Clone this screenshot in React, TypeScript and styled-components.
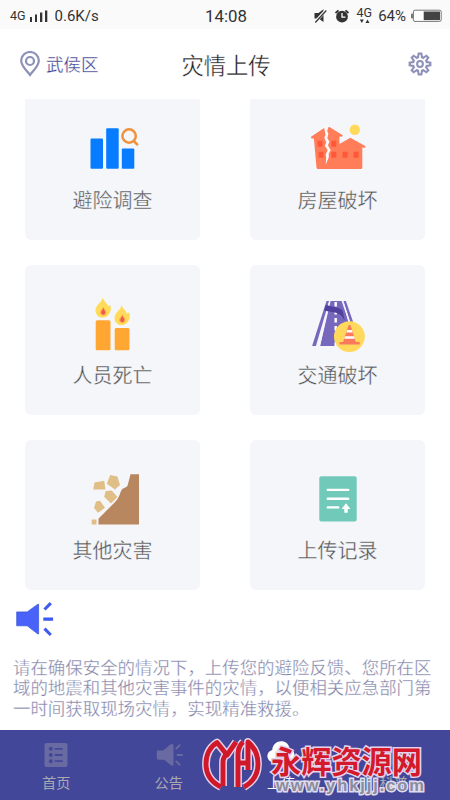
import React from "react";
import styled, { createGlobalStyle } from "styled-components";

const GlobalStyle = createGlobalStyle`
  * { box-sizing: border-box; }
  body {
    margin: 0;
    background: #fff;
    font-family: "Noto Sans CJK SC", "Noto Sans", sans-serif;
  }
  svg { display: block; flex: none; }
`;

const Screen = styled.div`
  width: 450px;
  height: 800px;
  display: flex;
  flex-direction: column;
  overflow: hidden;
  background: #fff;
`;

const StatusBar = styled.div`
  height: 29px;
  flex: none;
  display: grid;
  grid-template-columns: 1fr auto 1fr;
  align-items: center;
  padding: 2px 8px 0 10px;
  background: #fafafa;
  color: #333;
  font-family: Roboto, sans-serif;
`;

const StatusGroup = styled.div<{ $end?: boolean }>`
  display: flex;
  align-items: center;
  justify-content: ${(p) => (p.$end ? "flex-end" : "flex-start")};
`;

const StatusText = styled.span<{ $size: number; $ml?: number }>`
  font-size: ${(p) => p.$size}px;
  line-height: 20px;
  margin-left: ${(p) => p.$ml ?? 0}px;
  white-space: nowrap;
`;

const Header = styled.header`
  height: 70px;
  flex: none;
  display: grid;
  grid-template-columns: 1fr auto 1fr;
  align-items: center;
  padding: 0 18px 0 20px;
`;

const Location = styled.div`
  display: flex;
  align-items: center;
  gap: 6px;
  color: #383a8c;
  font-size: 17.5px;
  line-height: 26px;
  -webkit-text-stroke: 0.3px #fff;
`;

const Title = styled.h1`
  margin: 0 0 1px;
  color: #1c1c1c;
  font-size: 22.3px;
  font-weight: 400;
  line-height: 32px;
  -webkit-text-stroke: 0.35px #fff;
`;

const Settings = styled.div`
  justify-self: end;
`;

const Grid = styled.main`
  display: grid;
  grid-template-columns: 175px 175px;
  grid-template-rows: 141px 150px 150px;
  gap: 25px 50px;
  padding-left: 25px;
  flex: none;
`;

const Card = styled.div<{ $clipped?: boolean }>`
  display: flex;
  flex-direction: column;
  align-items: center;
  padding-top: ${(p) => (p.$clipped ? 17 : 26)}px;
  border-radius: ${(p) => (p.$clipped ? "0 0 6px 6px" : "6px")};
  background: #f4f6fa;
`;

const CardLabel = styled.span`
  margin-top: 4.5px;
  color: #505152;
  font-size: 20px;
  line-height: 30px;
  -webkit-text-stroke: 0.35px #f4f6fa;
`;

const Notice = styled.section`
  flex: 1;
  padding: 10px 0 0 13px;
`;

const NoticeText = styled.p`
  margin: 17px 0 0;
  color: #8082a8;
  font-size: 17.45px;
  line-height: 20.3px;
  white-space: nowrap;
  -webkit-text-stroke: 0.3px #fff;
`;

const TabBar = styled.nav`
  position: relative;
  height: 70px;
  flex: none;
  display: grid;
  grid-template-columns: repeat(4, 1fr);
  background: #434799;
`;

const Tab = styled.div<{ $active?: boolean }>`
  display: flex;
  flex-direction: column;
  align-items: center;
  padding-top: 11px;
  color: ${(p) => (p.$active ? "#fff" : "#aaa9b1")};
  font-size: 14.2px;
  line-height: 20px;
`;

const TabLabel = styled.span`
  margin-top: 3px;
`;

const Watermark = styled.div`
  position: absolute;
  left: 202px;
  top: 8px;
  display: flex;
  gap: 9px;
`;

const MarkName = styled.div`
  margin-top: 6px;
  color: #d3192b;
  font-size: 30.2px;
  font-weight: 700;
  line-height: 32px;
  white-space: nowrap;
  -webkit-text-stroke: 3px #e6d2eb;
  paint-order: stroke fill;
`;

const MarkUrl = styled.div`
  margin: -1px 0 0 5px;
  color: #8b8b9d;
  font-family: "Liberation Sans", Arial, sans-serif;
  font-size: 16.5px;
  font-weight: 700;
  letter-spacing: 1.9px;
  line-height: 21px;
  white-space: nowrap;
  -webkit-text-stroke: 3px #dfdced;
  paint-order: stroke fill;
`;

const CardIcon = ({ children }: { children: React.ReactNode }) => (
  <svg width="64" height="64" viewBox="55.5 26 64 64">{children}</svg>
);

const SurveyIcon = () => (
  <CardIcon>
    <g fill="#087cff">
      <rect x="65" y="48.5" width="12.5" height="30.3" rx="1" />
      <rect x="80.7" y="38.3" width="12.5" height="40.5" rx="1" />
      <rect x="96.3" y="58.5" width="12.5" height="20.3" rx="1" />
    </g>
    <g fill="none" stroke="#f0913d" strokeWidth="2.5">
      <circle cx="103.6" cy="46" r="6.7" />
      <path d="M108.2 51l4.2 4.2" />
    </g>
  </CardIcon>
);

const HouseIcon = () => (
  <CardIcon>
    <path d="M73.2 38.2 60.2 47l1 1.6 2.2-.2 2.6 29q.2 1.5 1.6 1.5h42.6q1.5 0 1.6-1.5V57.6l2.8.2.5-1.5-15.2-8.5-11 6.2V46.5l2.8.3.5-1.5-13.2-8.3Z" fill="#ff7d59" />
    <path d="M73.4 36.5 75 44.7l-1.2 3.1 2 4.6-1.6 3.3 3 4.2-2 4.5.5 3-.5 7.4 3.1-7.5-.1-3.8 2-3.2-2.8-5 1.6-3.6-2.2-3.7 1.1-4-1.2-3.2 1.7-5.3Z" fill="#f8f8fa" />
    <g fill="#ff5838">
      <rect x="67" y="50.8" width="5" height="6" rx=".6" />
      <rect x="80.8" y="50.8" width="5" height="6" rx=".6" />
      <rect x="68" y="61.8" width="5" height="6" rx=".6" />
      <rect x="80.8" y="61.8" width="5" height="6" rx=".6" />
      <rect x="92" y="61.8" width="5" height="6" rx=".6" />
      <rect x="103" y="61.8" width="5" height="6" rx=".6" />
    </g>
    <circle cx="104.3" cy="39.8" r="5.2" fill="#ffda59" />
  </CardIcon>
);

const Flame = ({ x, y }: { x: number; y: number }) => (
  <g transform={`translate(${x} ${y})`}>
    <path d="M7.5 0C8 4 12.3 5.6 12.5 9l2.3-1.2C17.5 13 13.4 20.5 7.8 20.5 2.5 20.5-.9 15.8.7 11 2.2 6.4 6.8 5.2 7.5 0Z" fill="#ffdb59" />
    <path d="M8 9.3c.2 2 3.5 4 3 6.2-.3 2-1.7 2.8-3 2.8s-3-1-3-3c0-2.3 2.5-2.7 3-6Z" fill="#ffa04f" />
    <path d="M8 10.6c0 2 2.2 3 1.9 4.9-.2 1.3-1 1.8-1.9 1.8s-1.7-.6-1.8-1.7c0-1.6 1.5-2.8 1.8-5Z" fill="#ef594c" />
  </g>
);

const CandlesIcon = () => (
  <CardIcon>
    <rect x="70.2" y="55.2" width="14.8" height="30" rx="1.5" fill="#ffa633" />
    <rect x="89.2" y="63" width="14.8" height="22.2" rx="1.5" fill="#ffa633" />
    <Flame x={69.7} y={32.2} />
    <Flame x={88.7} y={39.7} />
  </CardIcon>
);

const RoadIcon = () => (
  <CardIcon>
    <path d="M76 36h2.6L65.4 81h-3.8Z" fill="#7768be" />
    <path d="M79.4 36h13L104 81H69.6Z" fill="#7768be" />
    <path d="M93 36h2.4l8.6 25h-3.2Z" fill="#7768be" />
    <path d="m79.4 36-10.6 45M91.8 36l8.6 25" stroke="#f4f6fa" strokeWidth="1.4" />
    <path d="M85.2 37v44" stroke="#fff" strokeWidth="2.4" strokeDasharray="4.5 3.5" />
    <path d="m75.2 40 2.5.5c7 2 12.5 2 14.5 5.5l2 9.8c-2-3.8-4-6.2-8-7.8-4-1.3-8-1.2-12.5-2.5Z" fill="#51409d" />
    <circle cx="98.9" cy="71.6" r="15.4" fill="#ffd85c" />
    <path d="M98.2 60h1.6L105.4 77h3.8v2.4H89V77h3.6Z" fill="#fa795d" />
    <path d="M96.8 65h4.4l1 2.5h-6.3ZM94.7 71.2h8.7l1 2.6H93.8Z" fill="#fff" />
  </CardIcon>
);

const LandslideIcon = () => (
  <CardIcon>
    <path d="M105 34.2h8.5V84.5H73v-5.8c5-5.5 14-13.5 18.7-19.3 2.9-3.5 2.7-7.8 5.4-10.6 1-.8 4.3-1.3 5-3.3Z" fill="#b8875f" />
    <g fill="#dfbf86">
      <path d="m69 42.4 9.7-1.6 1.3 8.6H67.7Z" />
      <path d="m84.7 35 7.2 1.5 2.6 8.6-5 4.4-8.2-5.8Z" />
      <path d="m80.2 51 6-.5L92 57l-6.6 6.5-6.7-6.8Z" />
      <path d="m70.5 61.6 4-.8 5 7-7 5-4-4.7Z" />
      <rect x="66.2" y="79.5" width="4.8" height="5" rx=".6" />
    </g>
  </CardIcon>
);

const RecordIcon = () => (
  <CardIcon>
    <rect x="68.8" y="36.2" width="37.4" height="45.2" rx="2" fill="#71cab9" />
    <path d="M77.3 49.9h20.4M77.3 58.7h20.4M77.3 67.4h10.4" stroke="#fff" strokeWidth="2.4" strokeLinecap="round" />
    <path d="m95.5 63.2 4.4 5.8h-2.7v3.8h-3.4V69h-2.7Z" fill="#fff" />
  </CardIcon>
);

const cards = [
  { label: "避险调查", Icon: SurveyIcon },
  { label: "房屋破坏", Icon: HouseIcon },
  { label: "人员死亡", Icon: CandlesIcon },
  { label: "交通破坏", Icon: RoadIcon },
  { label: "其他灾害", Icon: LandslideIcon },
  { label: "上传记录", Icon: RecordIcon },
];

const PinIcon = () => (
  <svg width="20" height="26" viewBox="0 0 20 26" fill="none" stroke="#8d90b7" strokeWidth="2.2">
    <path d="M10 24C6.5 19.5 1.2 15 1.2 9.8a8.8 8.8 0 0 1 17.6 0C18.8 15 13.5 19.5 10 24Z" />
    <circle cx="10" cy="10" r="4" />
  </svg>
);

const teeth = Array.from({ length: 8 }, (_, i) => i * 45);

const GearIcon = () => (
  <svg width="24" height="24" viewBox="0 0 24 24">
    <g fill="#8d90b7">
      {teeth.map((a) => (
        <path key={a} d="M8.9 5.6 9.8.6h4.4l.9 5Z" transform={`rotate(${a} 12 12)`} />
      ))}
      <circle cx="12" cy="12" r="8" />
    </g>
    <g fill="#fff">
      {teeth.map((a) => (
        <path key={a} d="M10.9 6.5 11.4 2.8h1.2l.5 3.7Z" transform={`rotate(${a} 12 12)`} />
      ))}
      <circle cx="12" cy="12" r="6" />
    </g>
    <circle cx="12" cy="12" r="2.9" fill="none" stroke="#8d90b7" strokeWidth="2" />
  </svg>
);

const SignalIcon = () => (
  <svg width="26" height="16" viewBox="-4 0 26 16" fill="#333">
    <rect x="0" y="9" width="2" height="5" />
    <rect x="5" y="6.5" width="2" height="7.5" />
    <rect x="10" y="4.5" width="2.3" height="9.5" />
    <rect x="15" y="2.5" width="2.3" height="11.5" />
  </svg>
);

const StatusIcons = () => (
  <svg width="60" height="22" viewBox="313 3 60 22">
    <path d="M313.5 11h4l5-3.8V20l-5-3.4h-4Z" fill="#333" />
    <path d="m313.8 20.5 11-12" stroke="#fafafa" strokeWidth="3" />
    <path d="m314.3 20.5 11-12" stroke="#333" strokeWidth="1.2" />
    <circle cx="341" cy="14.7" r="5.9" fill="#333" />
    <path d="m334.5 11 3-2.7M344.5 8.3l3 2.7" stroke="#333" strokeWidth="1.8" />
    <path d="M341 11v4.2h3.4" fill="none" stroke="#fff" strokeWidth="1.3" />
    <text x="355.6" y="14.8" fill="#333" fontSize="12.5" fontFamily="Roboto, sans-serif">4G</text>
    <path d="M358.8 17.5h4l-2 3.4ZM364.5 20.9h4l-2-3.4Z" fill="#333" />
  </svg>
);

const BatteryIcon = () => (
  <svg width="31" height="14" viewBox="0 0 31 14">
    <path d="M0 4.7h2.2v4.6H0Z" fill="#777" />
    <rect x="2.4" y="1.2" width="27.8" height="11.2" rx="1.6" fill="#fff" stroke="#777" />
    <path d="M12.7 2.5H29v8.6H12.7Z" fill="#444" />
  </svg>
);

const MegaphoneIcon = () => (
  <svg width="46" height="40" viewBox="13 600 46 40">
    <path d="M16.7 611.9h10.5l10.7-7.7h.7v29.8h-.7l-10.7-8.2H16.7Z" fill="#4862fa" stroke="#3451d5" strokeWidth=".7" />
    <path d="m44.5 609.5 6.3-6.3M43.3 619.1h9.8M44.5 628.7l6.3 6.3" stroke="#3e5af0" strokeWidth="3.1" />
  </svg>
);

const ListTabIcon = () => (
  <svg width="26" height="28" viewBox="0 0 26 28">
    <rect x="1.5" y="2" width="23" height="24" rx="2" fill="#686aa1" />
    <g stroke="#434799" fill="#434799" strokeWidth="1.8" strokeLinecap="round">
      <path d="M12.5 7.8h6.5M12.5 14h6.5M12.5 20.2h6.5" />
      <circle cx="7.8" cy="7.8" r="1.1" />
      <circle cx="7.8" cy="14" r="1.1" />
      <circle cx="7.8" cy="20.2" r="1.1" />
    </g>
  </svg>
);

const NewsTabIcon = () => (
  <svg width="28" height="28" viewBox="0 0 28 28">
    <path d="M1.8 9.5h6.4l7.5-6.2q2.8-.8 2.8 1.5v18.7q0 1.8-2.2 1l-7.2-5.7H3.5Q1.8 18.5 1.8 17Z" fill="#686aa1" />
    <path d="m21.3 7.5 3.4-3.3M22.4 14h4.8M21.3 20.5l3.4 3.3" stroke="#686aa1" strokeWidth="1.8" strokeLinecap="round" />
  </svg>
);

const CloudTabIcon = () => (
  <svg width="28" height="28" viewBox="0 0 28 28">
    <path d="M7 21.5A6.4 6.4 0 0 1 5.2 8.9C6-2.5 21.4-2.5 22.6 7.5c7 1.5 6.5 14-1.4 14Z" fill="#fff" />
    <path d="M14 26V14m-5 5 5-5 5 5" fill="none" stroke="#f06b63" strokeWidth="3" />
  </svg>
);

const BookTabIcon = () => (
  <svg width="28" height="28" viewBox="0 0 28 28">
    <path d="M5 9q5-2 9 1 4-3 9-1v14q-5-1-9 2-4-3-9-2Z" fill="#5b5ea0" />
  </svg>
);

const MonogramStrokes = () => (
  <>
    <path d="M19 49C9 44 4 36 4 26 4 16 8 9 15 4.5L25 17 34 4" />
    <path d="M25 16q-4 3-4 8v24" />
    <path d="M41 4q-5 5-5 12v33" />
    <path d="M36 25h11" />
    <path d="M46 32V4c6 5 10 12 10 22 0 10-5 18-14 23" />
  </>
);

const MonogramIcon = () => (
  <svg width="60" height="54" viewBox="0 0 60 54">
    <g fill="none" stroke="#e6d2eb" strokeWidth="7.8" strokeLinejoin="round">
      <MonogramStrokes />
    </g>
    <g fill="none" stroke="#cf182a" strokeWidth="4.9" strokeLinejoin="round">
      <MonogramStrokes />
    </g>
  </svg>
);

export default function App() {
  return (
    <>
      <GlobalStyle />
      <Screen>
        <StatusBar>
          <StatusGroup>
            <StatusText $size={12.5}>4G</StatusText>
            <SignalIcon />
            <StatusText $size={15} $ml={3}>0.6K/s</StatusText>
          </StatusGroup>
          <StatusText $size={16.8}>14:08</StatusText>
          <StatusGroup $end>
            <StatusIcons />
            <StatusText $size={15} $ml={4}>64%</StatusText>
            <StatusText $size={15} $ml={5}><BatteryIcon /></StatusText>
          </StatusGroup>
        </StatusBar>
        <Header>
          <Location><PinIcon />武侯区</Location>
          <Title>灾情上传</Title>
          <Settings><GearIcon /></Settings>
        </Header>
        <Grid>
          {cards.map(({ label, Icon }, i) => (
            <Card key={label} $clipped={i < 2}>
              <Icon />
              <CardLabel>{label}</CardLabel>
            </Card>
          ))}
        </Grid>
        <Notice>
          <MegaphoneIcon />
          <NoticeText>
            请在确保安全的情况下，上传您的避险反馈、您所在区<br />
            域的地震和其他灾害事件的灾情，以便相关应急部门第<br />
            一时间获取现场灾情，实现精准救援。
          </NoticeText>
        </Notice>
        <TabBar>
          <Tab><ListTabIcon /><TabLabel>首页</TabLabel></Tab>
          <Tab><NewsTabIcon /><TabLabel>公告</TabLabel></Tab>
          <Tab $active><CloudTabIcon /><TabLabel>上传</TabLabel></Tab>
          <Tab><BookTabIcon /><TabLabel>科普</TabLabel></Tab>
          <Watermark>
            <MonogramIcon />
            <div>
              <MarkName>永辉资源网</MarkName>
              <MarkUrl>www.yhkjjj.com</MarkUrl>
            </div>
          </Watermark>
        </TabBar>
      </Screen>
    </>
  );
}
